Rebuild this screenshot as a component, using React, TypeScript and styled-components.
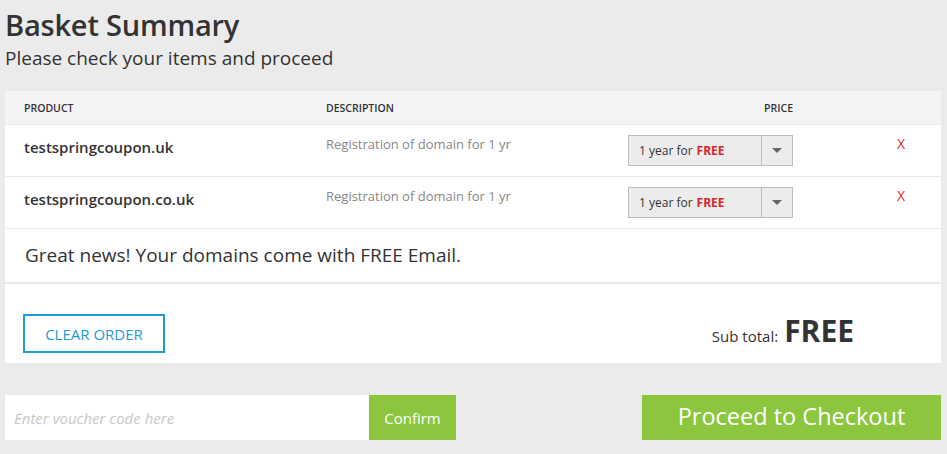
import React from "react";
import styled, { createGlobalStyle } from "styled-components";

const GlobalStyle = createGlobalStyle`
  html, body { margin: 0; padding: 0; background: #ebebeb; }
  body { font-family: "Open Sans", "Liberation Sans", sans-serif; color: #333; }
  * { box-sizing: border-box; }
`;

const Page = styled.div`
  width: 947px;
  height: 454px;
  padding: 0 6px 0 5px;
  overflow: hidden;
`;

const Title = styled.h1`
  margin: 0;
  padding-top: 5px;
  font-size: 29px;
  line-height: 39px;
  font-weight: 600;
  color: #333;
  letter-spacing: -0.2px;
`;

const Subtitle = styled.p`
  margin: 0;
  font-size: 19px;
  line-height: 28px;
  font-weight: 400;
  color: #333;
`;

const Panel = styled.div`
  margin-top: 19px;
  width: 936px;
  background: #fff;
`;

const Grid = styled.div`
  display: grid;
  grid-template-columns: 302px 302px 165px 1fr;
  padding-left: 19px;
`;

const HeaderRow = styled(Grid)`
  background: #f3f4f6;
  height: 34px;
  align-items: center;
  border-bottom: 1px solid #e8e8e8;
`;

const HeadCell = styled.div<{ $right?: boolean }>`
  font-size: 10.5px;
  font-weight: 600;
  text-transform: uppercase;
  color: #333;
  text-align: ${(p) => (p.$right ? "right" : "left")};
`;

const ItemRow = styled(Grid)`
  height: 52px;
  padding-top: 10px;
  border-bottom: 1px solid #e8e8e8;
  align-items: start;
`;

const Product = styled.div`
  padding-top: 2px;
  font-size: 15px;
  line-height: 20px;
  font-weight: 600;
  color: #333;
`;

const Description = styled.div`
  font-size: 13px;
  line-height: 18px;
  color: #888;
`;

const Select = styled.div`
  display: flex;
  height: 31px;
  border: 1px solid #bdbdbd;
  background: #ececec;
`;

const SelectText = styled.div`
  flex: 1;
  display: flex;
  align-items: center;
  padding-left: 10px;
  font-size: 12px;
  color: #333;
  border-right: 1px solid #bdbdbd;
`;

const Free = styled.span`
  color: #d9262c;
  font-weight: 700;
  margin-left: 4px;
`;

const Arrow = styled.div`
  width: 30px;
  display: flex;
  align-items: center;
  justify-content: center;
  &::after {
    content: "";
    border-left: 5px solid transparent;
    border-right: 5px solid transparent;
    border-top: 5px solid #666;
  }
`;

const Remove = styled.div`
  padding-left: 104px;
  font-size: 14px;
  line-height: 18px;
  color: #e0262b;
`;

const EmailRow = styled.div`
  height: 55px;
  padding: 14px 20px 0;
  font-size: 19px;
  line-height: 24px;
  color: #333;
  border-bottom: 2px solid #e8e8e8;
`;

const Footer = styled.div`
  display: flex;
  justify-content: space-between;
  align-items: flex-end;
  height: 79px;
  padding: 0 87px 10px 18px;
`;

const ClearButton = styled.button`
  width: 142px;
  height: 39px;
  border: 2px solid #229bd5;
  background: #fff;
  color: #229bd5;
  font-family: inherit;
  font-size: 15px;
  text-transform: uppercase;
  padding: 0;
`;

const SubTotal = styled.div`
  display: flex;
  align-items: baseline;
  gap: 6px;
  font-size: 15px;
  color: #333;
  line-height: 30px;
  margin-bottom: 2px;
`;

const SubTotalValue = styled.span`
  font-size: 30px;
  font-weight: 700;
  color: #333;
`;

const BottomBar = styled.div`
  margin-top: 32px;
  display: flex;
  justify-content: space-between;
  width: 936px;
`;

const VoucherForm = styled.div`
  display: flex;
  height: 45px;
`;

const VoucherInput = styled.input`
  width: 364px;
  height: 45px;
  border: none;
  outline: none;
  background: #fff;
  padding: 0 9px;
  font-family: inherit;
  font-size: 15px;
  font-style: italic;
  color: #333;
  &::placeholder { color: #c8c8c8; font-style: italic; }
`;

const GreenButton = styled.button<{ $big?: boolean }>`
  height: 45px;
  border: none;
  background: #8cc63f;
  color: #fff;
  font-family: inherit;
  font-size: ${(p) => (p.$big ? "23.5px" : "15px")};
  width: ${(p) => (p.$big ? "299px" : "87px")};
  padding: 0;
  padding-bottom: ${(p) => (p.$big ? "4px" : "0")};
`;

const items = ["testspringcoupon.uk", "testspringcoupon.co.uk"];

export default function App() {
  return (
    <Page>
      <GlobalStyle />
      <Title>Basket Summary</Title>
      <Subtitle>Please check your items and proceed</Subtitle>
      <Panel>
        <HeaderRow>
          <HeadCell>Product</HeadCell>
          <HeadCell>Description</HeadCell>
          <HeadCell $right>Price</HeadCell>
          <HeadCell />
        </HeaderRow>
        {items.map((name) => (
          <ItemRow key={name}>
            <Product>{name}</Product>
            <Description>Registration of domain for 1 yr</Description>
            <Select>
              <SelectText>
                1 year for<Free>FREE</Free>
              </SelectText>
              <Arrow />
            </Select>
            <Remove>X</Remove>
          </ItemRow>
        ))}
        <EmailRow>Great news! Your domains come with FREE Email.</EmailRow>
        <Footer>
          <ClearButton>Clear Order</ClearButton>
          <SubTotal>
            Sub total:<SubTotalValue>FREE</SubTotalValue>
          </SubTotal>
        </Footer>
      </Panel>
      <BottomBar>
        <VoucherForm>
          <VoucherInput placeholder="Enter voucher code here" />
          <GreenButton>Confirm</GreenButton>
        </VoucherForm>
        <GreenButton $big>Proceed to Checkout</GreenButton>
      </BottomBar>
    </Page>
  );
}
